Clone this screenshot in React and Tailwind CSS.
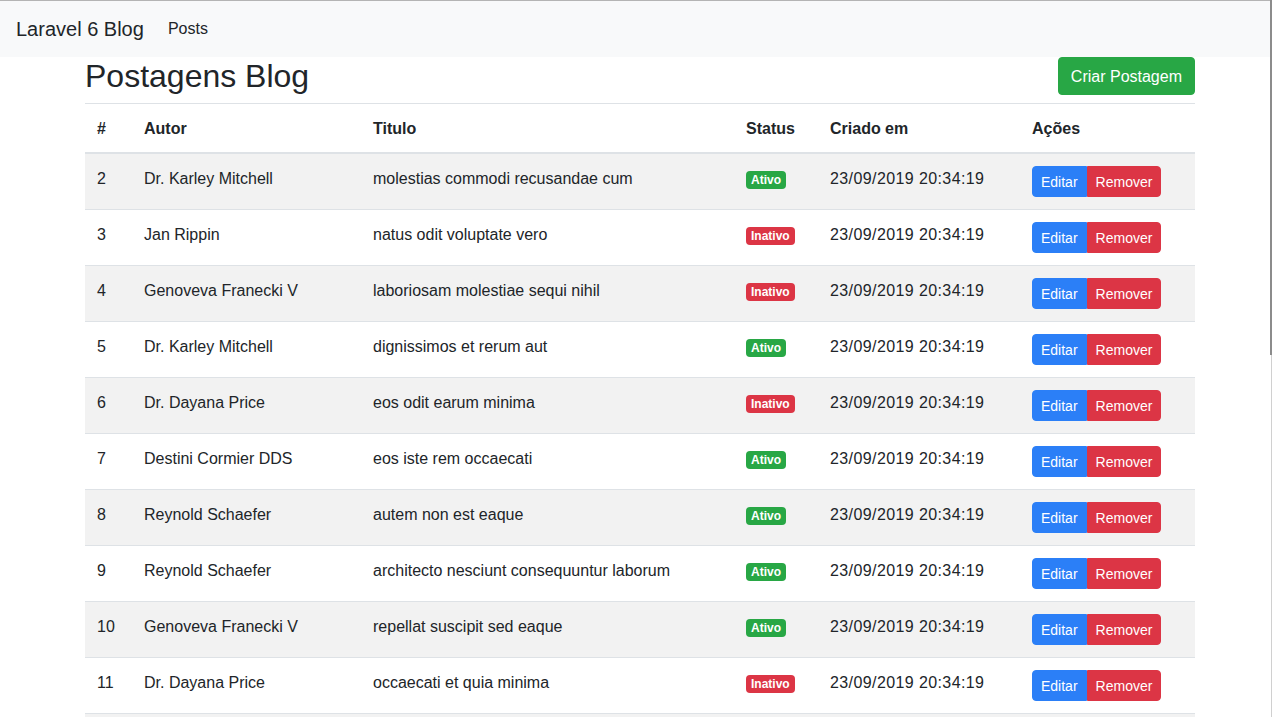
import React from 'react';

const posts = [
  { id: 2, autor: 'Dr. Karley Mitchell', titulo: 'molestias commodi recusandae cum', ativo: true },
  { id: 3, autor: 'Jan Rippin', titulo: 'natus odit voluptate vero', ativo: false },
  { id: 4, autor: 'Genoveva Franecki V', titulo: 'laboriosam molestiae sequi nihil', ativo: false },
  { id: 5, autor: 'Dr. Karley Mitchell', titulo: 'dignissimos et rerum aut', ativo: true },
  { id: 6, autor: 'Dr. Dayana Price', titulo: 'eos odit earum minima', ativo: false },
  { id: 7, autor: 'Destini Cormier DDS', titulo: 'eos iste rem occaecati', ativo: true },
  { id: 8, autor: 'Reynold Schaefer', titulo: 'autem non est eaque', ativo: true },
  { id: 9, autor: 'Reynold Schaefer', titulo: 'architecto nesciunt consequuntur laborum', ativo: true },
  { id: 10, autor: 'Genoveva Franecki V', titulo: 'repellat suscipit sed eaque', ativo: true },
  { id: 11, autor: 'Dr. Dayana Price', titulo: 'occaecati et quia minima', ativo: false },
];

export default function App() {
  return (
    <div className="min-h-[717px] bg-white text-[#212529] text-base border-t border-[#b4b4b4] border-r border-r-[#d0d0d0] font-['Liberation_Sans',Arial,sans-serif]">
      {/* scrollbar thumb */}
      <div className="fixed top-0 right-0 w-[2px] h-[355px] bg-[#8c8c8c]" />

      {/* Navbar */}
      <nav className="bg-[#f8f9fa] h-[56px] px-4 flex items-center">
        <span className="text-[20px] leading-[30px] mr-4">Laravel 6 Blog</span>
        <a className="px-2 text-base leading-6 text-[#212529]">Posts</a>
      </nav>

      <div className="w-[1110px] ml-[85px]">
        <div className="flex items-center justify-between mb-2">
          <h1 className="text-[32px] leading-[38px] font-medium">Postagens Blog</h1>
          <button className="bg-[#28a745] text-white text-base leading-6 px-3 pt-[7px] pb-[5px] border border-[#28a745] rounded">
            Criar Postagem
          </button>
        </div>

        <table className="w-full table-fixed border-collapse">
          <thead>
            <tr className="text-left">
              <th className="w-[47px] px-3 pt-[13px] pb-[11px] border-t border-[#dee2e6] border-b-2 font-bold align-bottom">#</th>
              <th className="w-[229px] px-3 pt-[13px] pb-[11px] border-t border-[#dee2e6] border-b-2 font-bold align-bottom">Autor</th>
              <th className="w-[373px] px-3 pt-[13px] pb-[11px] border-t border-[#dee2e6] border-b-2 font-bold align-bottom">Titulo</th>
              <th className="w-[84px] px-3 pt-[13px] pb-[11px] border-t border-[#dee2e6] border-b-2 font-bold align-bottom">Status</th>
              <th className="w-[202px] px-3 pt-[13px] pb-[11px] border-t border-[#dee2e6] border-b-2 font-bold align-bottom">Criado em</th>
              <th className="w-[175px] px-3 pt-[13px] pb-[11px] border-t border-[#dee2e6] border-b-2 font-bold align-bottom">Ações</th>
            </tr>
          </thead>
          <tbody>
            {posts.map((p, i) => (
              <tr key={p.id} className={i % 2 === 0 ? 'bg-[#f2f2f2]' : 'bg-white'}>
                <td className="px-3 pt-[13px] pb-[11px] border-t border-[#dee2e6] align-top leading-6">{p.id}</td>
                <td className="px-3 pt-[13px] pb-[11px] border-t border-[#dee2e6] align-top leading-6">{p.autor}</td>
                <td className="px-3 pt-[13px] pb-[11px] border-t border-[#dee2e6] align-top leading-6">{p.titulo}</td>
                <td className="px-3 pt-[13px] pb-[11px] border-t border-[#dee2e6] align-top leading-6">
                  <span
                    className={`inline-block text-[12px] font-bold leading-none text-white px-[5px] pt-[3px] pb-[3px] rounded align-baseline ${
                      p.ativo ? 'bg-[#28a745]' : 'bg-[#dc3545]'
                    }`}
                  >
                    {p.ativo ? 'Ativo' : 'Inativo'}
                  </span>
                </td>
                <td className="px-3 pt-[13px] pb-[11px] border-t border-[#dee2e6] align-top leading-6 tracking-[0.4px]">23/09/2019 20:34:19</td>
                <td className="p-3 border-t border-[#dee2e6] align-top leading-6">
                  <div className="flex">
                    <button className="bg-[#2b7ff7] border border-[#2b7ff7] text-white text-sm leading-[21px] px-2 pt-[5px] pb-[3px] rounded-l">
                      Editar
                    </button>
                    <button className="bg-[#dc3545] border border-[#dc3545] text-white text-sm leading-[21px] px-2 pt-[5px] pb-[3px] rounded-r">
                      Remover
                    </button>
                  </div>
                </td>
              </tr>
            ))}
            <tr className="bg-[#f2f2f2]">
              <td colSpan={6} className="h-[56px] border-t border-[#dee2e6]" />
            </tr>
          </tbody>
        </table>
      </div>
    </div>
  );
}
